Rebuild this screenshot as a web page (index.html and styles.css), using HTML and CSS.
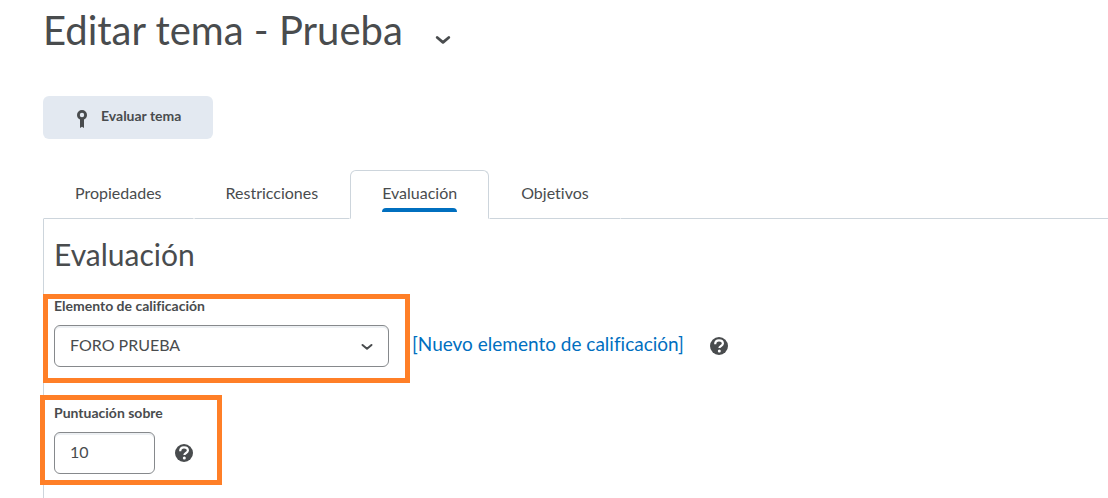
FILE: index.html
```html
<!DOCTYPE html>
<html lang="es">
<head>
    <meta charset="UTF-8">
    <meta name="viewport" content="width=device-width, initial-scale=1.0">
    <title>Editar tema - Prueba</title>
    <link rel="stylesheet" href="styles.css">
</head>
<body>

    <header class="page-header">
        <h1>Editar tema - Prueba</h1>
        <button type="button" class="menu-button" aria-label="Acciones para Prueba">
            <svg width="16" height="10" viewBox="0 0 16 10"><path d="M2.200 2.500 L8 7.400 L13.800 2.500" fill="none" stroke="#494c4e" stroke-width="2.800" stroke-linecap="round" stroke-linejoin="round"/></svg>
        </button>
    </header>

    <main>
        <button type="button" class="assess-button">
            <svg width="10" height="18" viewBox="0 0 10 18"><path fill="#494c4e" fill-rule="evenodd" d="M5 0a5 5 0 0 1 5 5 5 5 0 0 1-3 4.500V18L5 16.800 3 18V9.500A5 5 0 0 1 0 5a5 5 0 0 1 5-5zM5 2.800a2.200 2.200 0 1 0 0 4.400 2.200 2.200 0 0 0 0-4.400z"/></svg>
            <span>Evaluar tema</span>
        </button>

        <!-- Tabs -->
        <nav class="tabs">
            <a href="#propiedades" class="tab">Propiedades</a>
            <a href="#restricciones" class="tab">Restricciones</a>
            <a href="#evaluacion" class="tab active" aria-current="page">Evaluación</a>
            <a href="#objetivos" class="tab">Objetivos</a>
        </nav>

        <section class="panel" id="evaluacion">
            <h2>Evaluación</h2>

            <div class="row">
                <div class="field highlight grade-item">
                    <label for="grade-item">Elemento de calificación</label>
                    <select id="grade-item">
                        <option>FORO PRUEBA</option>
                    </select>
                    <svg class="select-arrow" width="12" height="8" viewBox="0 0 12 8"><path d="M1.500 2 L6 5.800 L10.500 2" fill="none" stroke="#494c4e" stroke-width="2" stroke-linecap="round" stroke-linejoin="round"/></svg>
                </div>
                <a href="#nuevo" class="new-item">[Nuevo elemento de calificación]</a>
                <button type="button" class="help" aria-label="Ayuda sobre el elemento de calificación">
                    <svg width="18" height="18" viewBox="0 0 18 18"><circle cx="9" cy="9" r="9" fill="#494c4e"/><path d="M5.200 7.200C5.200 4.500 6.800 3.400 9 3.400c2.300 0 3.900 1.200 3.900 3.200 0 2.600-3.500 2.300-3.500 4.500" fill="none" stroke="#fff" stroke-width="2.200"/><circle cx="9.300" cy="13.900" r="1.500" fill="#fff"/></svg>
                </button>
            </div>

            <div class="row">
                <div class="field highlight score">
                    <label for="score">Puntuación sobre</label>
                    <div class="score-line">
                        <input type="text" id="score" value="10">
                        <button type="button" class="help" aria-label="Ayuda sobre la puntuación">
                            <svg width="18" height="18" viewBox="0 0 18 18"><circle cx="9" cy="9" r="9" fill="#494c4e"/><path d="M5.200 7.200C5.200 4.500 6.800 3.400 9 3.400c2.300 0 3.900 1.200 3.900 3.200 0 2.600-3.500 2.300-3.500 4.500" fill="none" stroke="#fff" stroke-width="2.200"/><circle cx="9.300" cy="13.900" r="1.500" fill="#fff"/></svg>
                        </button>
                    </div>
                </div>
            </div>
        </section>
    </main>

</body>
</html>
```
FILE: styles.css
```css
/* General Page Styling */
* {
    box-sizing: border-box;
}

body {
    margin: 0;
    padding-left: 43px;
    font-family: Lato, 'Liberation Sans', sans-serif;
    font-variant-ligatures: none;
    color: #494c4e;
    background-color: #fff;
}

button {
    border: none;
    padding: 0;
    background: none;
    color: inherit;
    font-family: inherit;
    cursor: pointer;
}

svg {
    display: block;
}

/* Title */
.page-header {
    display: flex;
    align-items: center;
    gap: 32px;
    height: 60px;
}

h1 {
    margin: 0;
    font-size: 40px;
    line-height: 60px;
    font-weight: normal;
}

.menu-button {
    padding-top: 20px;
}

.assess-button {
    display: flex;
    align-items: center;
    gap: 14px;
    height: 43px;
    margin-top: 36px;
    padding: 0 32px 0 34px;
    border-radius: 6px;
    background-color: #e3e9f1;
    font-size: 14px;
    line-height: 20px;
    font-weight: bold;
}

.assess-button svg {
    margin-top: 3px;
}

.assess-button span {
    padding-bottom: 3px;
}

/* Tabs */
.tabs {
    display: flex;
    margin-top: 31px;
}

.tabs::after {
    content: "";
    flex: 1;
    border-bottom: 1px solid #cdd5dc;
}

.tab {
    height: 49px;
    padding: 10px 31px;
    border: 1px solid transparent;
    border-bottom-color: #cdd5dc;
    font-size: 16px;
    line-height: 24px;
    color: #494c4e;
    text-decoration: none;
}

.tab.active {
    border-color: #cdd5dc;
    border-bottom-color: transparent;
    border-radius: 6px 6px 0 0;
}

.tab.active::after {
    content: "";
    display: block;
    height: 4px;
    margin-top: 3px;
    border-radius: 4px 4px 0 0;
    background-color: #006fbf;
}

/* Panel */
.panel {
    border-left: 1px solid #cdd5dc;
    padding: 14px 10px 24px;
}

h2 {
    margin: 0 0 21px;
    font-size: 30px;
    line-height: 42px;
    font-weight: normal;
}

.row {
    display: flex;
    align-items: flex-end;
}

.row + .row {
    margin-top: 36px;
}

.field {
    position: relative;
}

.field label {
    display: block;
    margin-bottom: 9px;
    font-size: 14px;
    line-height: 20px;
    font-weight: bold;
}

.grade-item {
    width: 335px;
    margin-right: 23px;
}

select,
input {
    display: block;
    height: 42px;
    padding: 0 15px 4px;
    border: 1px solid #86898c;
    border-radius: 6px;
    background-color: #fff;
    box-shadow: inset 0 2px 0 #edf0f3;
    font-family: inherit;
    font-size: 16px;
    color: #494c4e;
}

select {
    width: 100%;
    appearance: none;
}

input {
    width: 101px;
}

.select-arrow {
    position: absolute;
    right: 16px;
    bottom: 16px;
    pointer-events: none;
}

.new-item {
    padding-right: 6px;
    font-size: 19px;
    line-height: 46px;
    color: #006fbf;
    text-decoration: none;
}

.help {
    margin: 0 0 12px 20px;
}

.score-line {
    display: flex;
    align-items: flex-end;
}

/* Orange frames drawn over the fields */
.highlight::after {
    content: "";
    position: absolute;
    border: 5px solid #ff7f27;
    pointer-events: none;
}

.grade-item::after {
    inset: -2px -21px -16px -11px;
}

.score::after {
    inset: -8px -29px -11px -14px;
}
```
